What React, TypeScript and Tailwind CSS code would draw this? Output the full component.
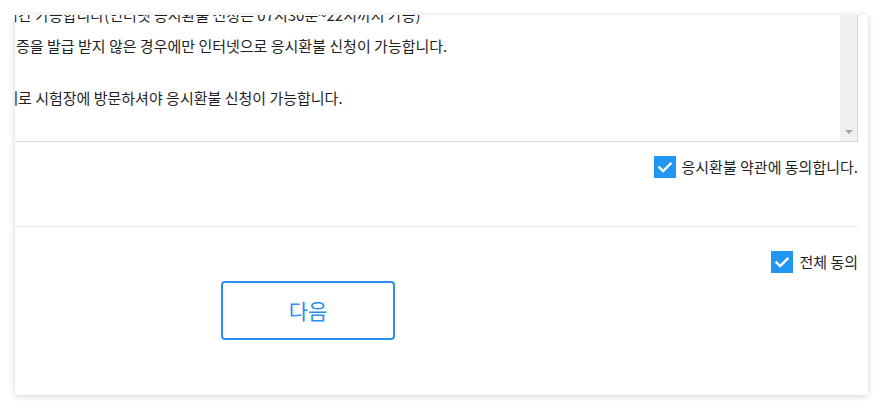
import React from "react";

const FONT = "font-['Noto_Sans_CJK_KR','Noto_Sans',sans-serif]";

function CheckBox() {
  return (
    <span className="flex h-[22px] w-[22px] shrink-0 items-center justify-center bg-[#2196f3]">
      <svg width="14" height="11" viewBox="0 0 14 11" fill="none">
        <path d="M1.5 5.5 L5.2 9 L12.5 1.8" stroke="#fff" strokeWidth="2.4" strokeLinecap="square" />
      </svg>
    </span>
  );
}

function Line({ prefix, rest, className = "", wide = false }: { prefix: string; rest: string; className?: string; wide?: boolean }) {
  return (
    <div className={`flex ${className}`}>
      <span className={`flex shrink-0 justify-end overflow-hidden ${wide ? "w-[45px]" : "w-[43px]"}`}>{prefix}</span>
      <span>{rest}</span>
    </div>
  );
}

export default function App() {
  return (
    <div className={`w-[883px] h-[410px] bg-white pt-[15px] pl-[15px] ${FONT}`}>
      <div className="flex h-[380px] w-[853px] flex-col overflow-hidden bg-white shadow-[0_1px_6px_rgba(0,0,0,0.18)]">
        {/* textarea */}
        <div className="flex h-[127px] w-[843px] shrink-0 border-b border-[#d6d6d6]">
          <div className="flex-1 overflow-hidden">
            <div className="ml-[-42px] w-[900px] whitespace-nowrap text-[15px] leading-[26px] text-[#1f1f1f]">
              <Line wide className="mt-[-13px]" prefix="업무시" rest="간 가능합니다(인터넷 응시환불 신청은 07시30분~22시까지 가능)" />
              <Line className="mt-[5px]" prefix="수험" rest="증을 발급 받지 않은 경우에만 인터넷으로 응시환불 신청이 가능합니다." />
              <div>&nbsp;</div>
              <Line wide prefix="실제" rest="로 시험장에 방문하셔야 응시환불 신청이 가능합니다." />
            </div>
          </div>
          <div className="flex w-[17px] flex-col justify-end items-center bg-[#f0f0f0] pb-[7px]">
            <svg width="8" height="4" viewBox="0 0 8 4">
              <path d="M0 0 H8 L4 4 Z" fill="#a3a3a3" />
            </svg>
          </div>
          <div className="w-[1px] bg-[#d6d6d6]" />
        </div>

        {/* agree row */}
        <div className="mt-[14px] flex w-[843px] items-center justify-end gap-[6px]">
          <CheckBox />
          <span className="text-[15px] leading-[22px] text-[#1f1f1f]">응시환불 약관에 동의합니다.</span>
        </div>

        {/* divider */}
        <div className="mt-[48px] h-[1px] w-[843px] bg-[#e6e6e6]" />

        {/* all agree */}
        <div className="mt-[24px] flex w-[843px] items-center justify-end gap-[6px]">
          <CheckBox />
          <span className="text-[15px] leading-[22px] text-[#1f1f1f]">전체 동의</span>
        </div>

        {/* button */}
        <div className="mt-[8px] pl-[206px]">
          <button className="flex h-[59px] w-[174px] items-center justify-center rounded-[4px] border-2 border-[#2b8ff0] bg-white text-[21px] text-[#2b8ff0]">
            다음
          </button>
        </div>
      </div>
    </div>
  );
}
